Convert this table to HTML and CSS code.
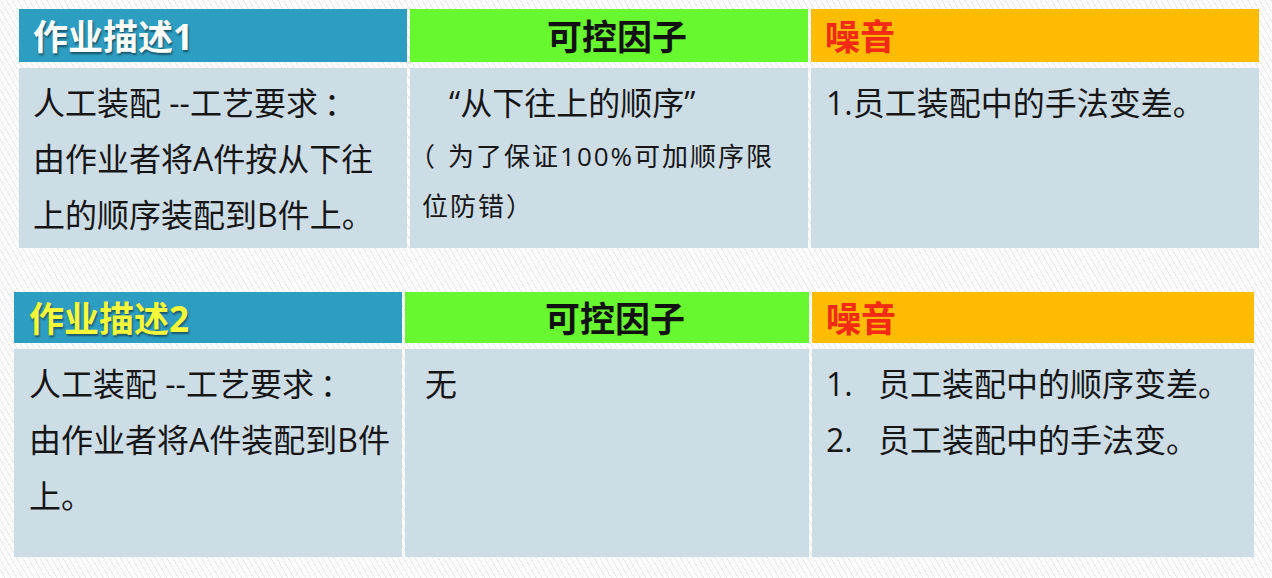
FILE: index.html
```html
<!DOCTYPE html>
<html lang="zh-CN">
<head>
<meta charset="utf-8">
<title>作业描述</title>
<link rel="stylesheet" href="styles.css">
</head>
<body>
<main class="page">
  <section class="tbl tbl-one">
    <div class="hd hd-desc"><span class="desc-white">作业描述1</span></div>
    <div class="hd hd-ctrl">可控因子</div>
    <div class="hd hd-noise">噪音</div>
    <div class="cell">
      <p class="ln">人工装配 --工艺要求<span class="colon">：</span></p>
      <p class="ln">由作业者将A件按从下往</p>
      <p class="ln">上的顺序装配到B件上。</p>
    </div>
    <div class="cell cell-mid">
      <p class="ln quote">“从下往上的顺序”</p>
      <p class="note"><span class="paren">（</span>为了保证100%可加顺序限<br>位防错）</p>
    </div>
    <div class="cell">
      <p class="ln">1.员工装配中的手法变差。</p>
    </div>
  </section>

  <section class="tbl tbl-two">
    <div class="hd hd-desc"><span class="desc-yellow">作业描述2</span></div>
    <div class="hd hd-ctrl">可控因子</div>
    <div class="hd hd-noise">噪音</div>
    <div class="cell">
      <p class="ln">人工装配 --工艺要求<span class="colon">：</span></p>
      <p class="ln">由作业者将A件装配到B件</p>
      <p class="ln">上。</p>
    </div>
    <div class="cell cell-none">
      <p class="ln">无</p>
    </div>
    <div class="cell">
      <ol class="list">
        <li class="ln"><span class="num">1.</span><span>员工装配中的顺序变差。</span></li>
        <li class="ln"><span class="num">2.</span><span>员工装配中的手法变。</span></li>
      </ol>
    </div>
  </section>
</main>
</body>
</html>
```

FILE: styles.css
```css
* {
  box-sizing: border-box;
}

html, body {
  margin: 0;
  padding: 0;
}

body {
  width: 1272px;
  height: 578px;
  overflow: hidden;
  font-family: "Open Sans", "Noto Sans CJK SC", sans-serif;
  color: #161616;
  background-color: #fafafa;
  background-image: repeating-linear-gradient(60deg, #fcfcfc 0 4px, #ebebeb 4px 5px);
}

.page {
  display: flex;
  flex-direction: column;
  padding-top: 9px;
}

.tbl {
  display: grid;
  width: 1240px;
  column-gap: 3px;
  row-gap: 6px;
}

.tbl-one {
  margin-left: 19px;
  grid-template-columns: 388px 398px 448px;
  grid-template-rows: 53px 180px;
}

.tbl-two {
  margin-left: 14px;
  margin-top: 44px;
  grid-template-columns: 388px 404px 442px;
  grid-template-rows: 51px 208px;
}

.hd {
  font-size: 35px;
  font-weight: 700;
  display: flex;
  align-items: center;
  padding: 0 14px 3px;
  white-space: nowrap;
}

.hd-desc {
  background: #2d9dc1;
}

.desc-white {
  color: #ffffff;
  text-shadow: 1px 2px 2px rgba(0, 0, 0, 0.45);
}

.desc-yellow {
  color: #f6f83a;
  text-shadow: 1px 2px 2px rgba(0, 0, 0, 0.45);
}

.tbl-two .hd-desc {
  padding-left: 15px;
}

.hd-ctrl {
  background: #68f830;
  color: #111111;
  justify-content: center;
  padding-left: 30px;
}

.hd-noise {
  background: #ffbc00;
  color: #f52a14;
  text-shadow: 0 0 1px rgba(150, 20, 0, 0.3);
  padding-left: 14px;
}

.cell {
  background: #cddde6;
  padding: 7px 14px 0;
}

.tbl-one .cell:nth-child(6) {
  padding-left: 15px;
}

.tbl-two .cell {
  padding-left: 15px;
}

.tbl-two .cell-none {
  padding-left: 20px;
}

.tbl-two .cell:nth-child(6) {
  padding-left: 14px;
}

.ln {
  margin: 0;
  font-size: 32px;
  line-height: 56px;
  white-space: nowrap;
}

.colon {
  margin-left: 6px;
}

.cell-mid {
  padding-left: 12px;
}

.quote {
  padding-left: 27px;
}

.note {
  margin: 0;
  font-size: 26px;
  line-height: 50px;
  letter-spacing: 2px;
  white-space: nowrap;
}

.paren {
  font-feature-settings: "halt";
  margin-right: 11px;
}

.list {
  list-style: none;
  margin: 0;
  padding: 0;
}

.list li {
  display: flex;
}

.num {
  width: 52px;
  flex: none;
}
```
